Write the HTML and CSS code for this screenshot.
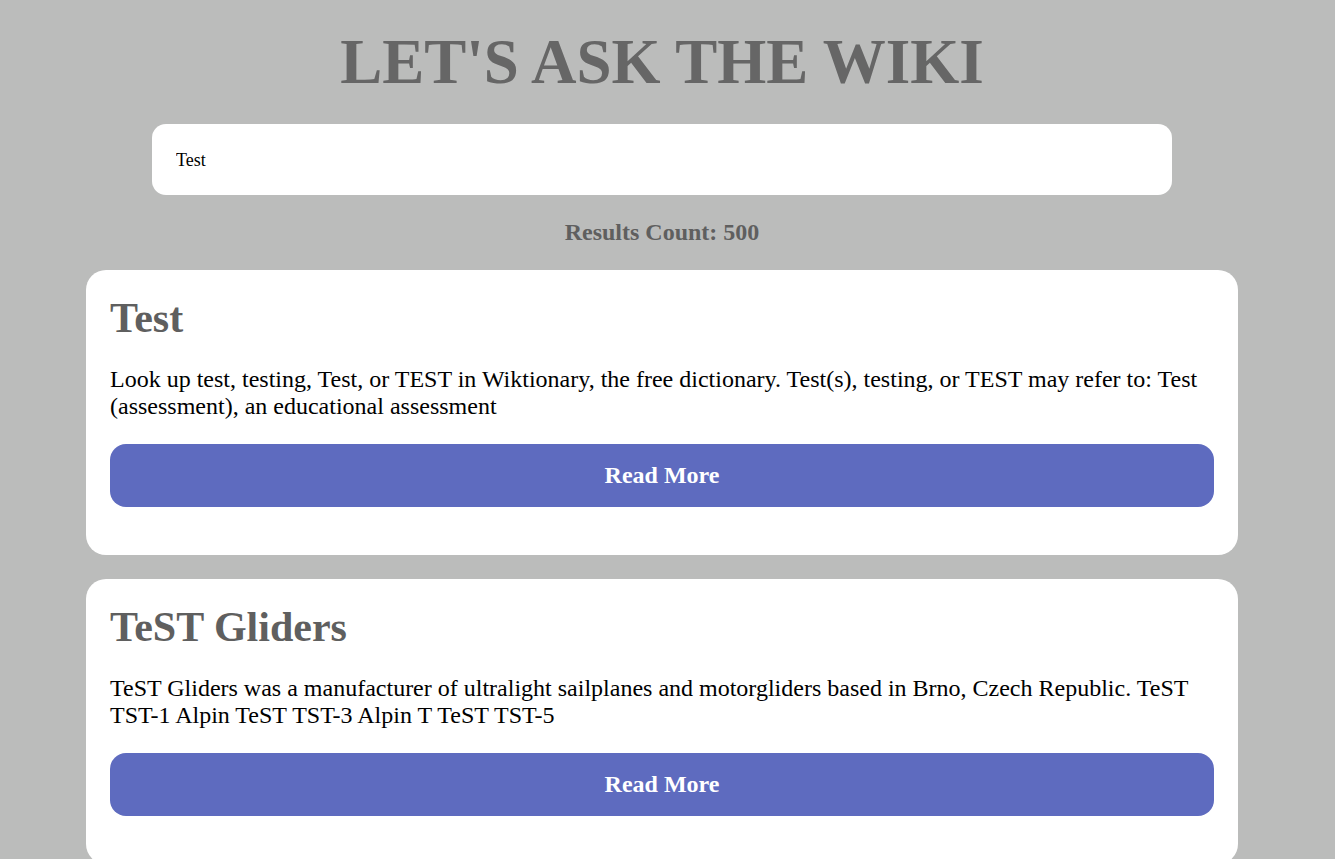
FILE: index.html
```html
<!DOCTYPE html>
<html lang="en">
<head>
<meta charset="utf-8">
<title>Let's Ask The Wiki</title>
<link rel="stylesheet" href="styles.css">
</head>
<body>
<div class="page">
  <h1 class="title">LET'S ASK THE WIKI</h1>
  <input class="search" type="text" value="Test">
  <h3 class="count">Results Count: 500</h3>
  <div class="results">
    <div class="card">
      <h2 class="card-title">Test</h2>
      <p class="card-text">Look up test, testing, Test, or TEST in Wiktionary, the free dictionary. Test(s), testing, or TEST may refer to: Test (assessment), an educational assessment</p>
      <button class="btn">Read More</button>
    </div>
    <div class="card">
      <h2 class="card-title">TeST Gliders</h2>
      <p class="card-text">TeST Gliders was a manufacturer of ultralight sailplanes and motorgliders based in Brno, Czech Republic. TeST TST-1 Alpin TeST TST-3 Alpin T TeST TST-5</p>
      <button class="btn">Read More</button>
    </div>
  </div>
</div>
</body>
</html>
```

FILE: styles.css
```css
html {
  scrollbar-width: none;
}
html::-webkit-scrollbar {
  display: none;
}
body {
  margin: 0;
  background: #bbbcbb;
  font-family: "Liberation Serif", "Times New Roman", serif;
}
.page {
  width: 1324px;
  padding-top: 26px;
  display: flex;
  flex-direction: column;
  align-items: center;
}
.title {
  margin: 0 0 25px;
  font-size: 63px;
  font-weight: bold;
  color: #666666;
  line-height: normal;
}
.search {
  box-sizing: border-box;
  width: 1020px;
  height: 71px;
  border: none;
  outline: none;
  border-radius: 14px;
  background: #ffffff;
  padding: 2px 24px 0;
  font-family: "Liberation Serif", "Times New Roman", serif;
  font-size: 18px;
  color: #000;
  margin: 0 0 24px;
}
.count {
  margin: 0 0 24px;
  font-size: 24px;
  font-weight: bold;
  color: #5f5f5f;
  line-height: normal;
}
.results {
  display: flex;
  flex-direction: column;
  gap: 24px;
  width: 1152px;
}
.card {
  background: #ffffff;
  border-radius: 20px;
  padding: 24px;
  display: flex;
  flex-direction: column;
}
.card-title {
  margin: 0;
  font-size: 42px;
  font-weight: bold;
  color: #5f5f5f;
  line-height: normal;
}
.card-text {
  margin: 24px 0;
  font-size: 24px;
  color: #000;
  line-height: normal;
}
.btn {
  height: 63px;
  border: none;
  border-radius: 16px;
  background: #5e6bbf;
  color: #ffffff;
  font-family: "Liberation Serif", "Times New Roman", serif;
  font-size: 24px;
  font-weight: bold;
  margin-bottom: 24px;
  cursor: pointer;
}
```
